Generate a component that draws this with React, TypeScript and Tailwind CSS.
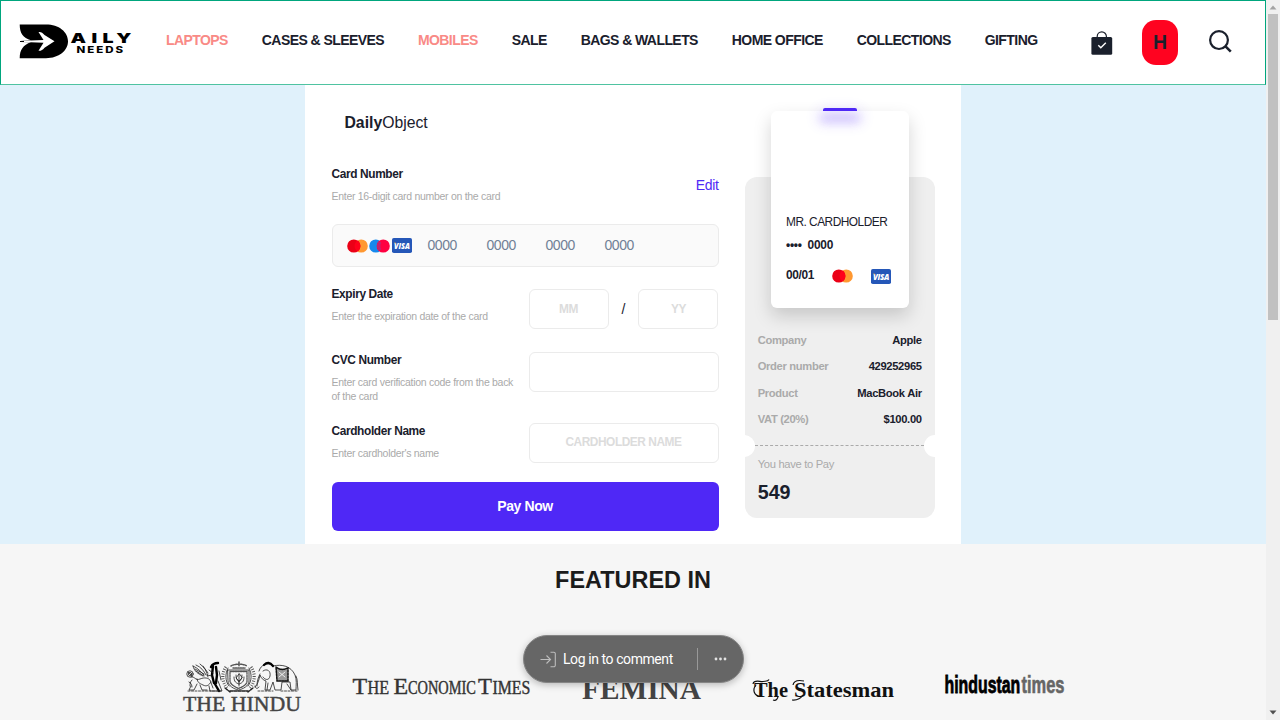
import type { ReactNode } from "react";

const navItems = [
  { label: "LAPTOPS", hot: true },
  { label: "CASES & SLEEVES" },
  { label: "MOBILES", hot: true },
  { label: "SALE" },
  { label: "BAGS & WALLETS" },
  { label: "HOME OFFICE" },
  { label: "COLLECTIONS" },
  { label: "GIFTING" },
];

const summary = [
  ["Company", "Apple"],
  ["Order number", "429252965"],
  ["Product", "MacBook Air"],
  ["VAT (20%)", "$100.00"],
];

function DailyLogo() {
  return (
    <svg width="118" height="38" viewBox="0 0 118 38" className="block">
      <path d="M.7 1.500H27C40 1.500 49 9 49 18.300S40 35.200 27 35.200H.7C.7 27 4 22 12 19.300L1 18.900V17.900L12 17.300C4 15 .7 10 .7 1.500Z" fill="#000" />
      <path d="M5 17.700L24.500 17L19.500 9C22 8.700 23.500 9.500 25.500 12L35.500 18.300L25.500 24.800C23.500 27.300 22 28 19.500 27.800L24.500 19.800L5 19.100Z" fill="#fff" />
      <g fontFamily="Inter, sans-serif" fontWeight="900" fill="#000">
        <text transform="translate(51.500 20.200) scale(1.450 1)" fontSize="13.500" letterSpacing="3.700">AILY</text>
        <text transform="translate(57.500 30.200) scale(1.350 1)" fontSize="8.500" fontWeight="800" letterSpacing="1.500">NEEDS</text>
      </g>
    </svg>
  );
}

function Mastercard() {
  return (
    <svg width="21" height="14" viewBox="0 0 21 14" className="block">
      <circle cx="14.2" cy="7" r="6.6" fill="#ff9831" />
      <circle cx="6.8" cy="7" r="6.6" fill="#eb0016" />
      <path d="M10.5 1.5a6.6 6.6 0 0 1 0 11a6.6 6.6 0 0 1 0-11Z" fill="#ff001b" />
    </svg>
  );
}

function Maestro() {
  return (
    <svg width="21" height="14" viewBox="0 0 21 14" className="block">
      <circle cx="6.8" cy="7" r="6.6" fill="#1689ed" />
      <circle cx="14.2" cy="7" r="6.6" fill="#ff0041" />
      <path d="M9 4h3M8 6h3.5M8 8h3.5M9 10h3" stroke="#8a4598" strokeWidth="1" />
    </svg>
  );
}

function Visa() {
  return (
    <svg width="20" height="15" viewBox="0 0 20 15" className="block">
      <rect width="20" height="15" rx="1.8" fill="#2557b8" />
      <text x="2" y="10.500" textLength="16" lengthAdjust="spacingAndGlyphs" fontFamily="Open Sans, sans-serif" fontStyle="italic" fontWeight="800" fontSize="8.200" fill="#fff">VISA</text>
      <path d="M2 4.6h1.5l.6 1.500Z" fill="#f4a83c" />
    </svg>
  );
}

function Label({ title, hint }: { title: string; hint: string }) {
  return (
    <div className="w-[190px]">
      <div className="h-[18px] text-[11.900px] font-bold leading-[18px] tracking-[-0.370px]">{title}</div>
      <div className="mt-[6px] text-[10.500px] leading-[14px] tracking-[-0.290px] text-[#aaa]">{hint}</div>
    </div>
  );
}

function Field({ children, className }: { children?: ReactNode; className: string }) {
  return (
    <div className={`flex h-[40px] items-center justify-center rounded-[6px] border border-[#ebebeb] pt-px text-[11.900px] font-bold tracking-[-0.450px] text-[#dcdcdc] ${className}`}>
      {children}
    </div>
  );
}

function Crest() {
  return (
    <g fill="none" stroke="#222" strokeWidth="0.8" strokeLinecap="round">
      <circle cx="8" cy="12" r="3.2" />
      <circle cx="8" cy="12" r="1.600" />
      <path d="M6 10l4 4M9 15c4-1 4 4 9 2s8-1 10 1l3 8M9 24l-2 4h5l3-6M18 23l2 5h5M27 24l1 5h6M15 17c1 4 2 4 6 6s6 0 8-3M10 18c-2 2-2 4-2 6M7 20c2 1 3 3 3 5" />
      <path d="M11 4c5 2 8 6 11 9M14 3c5 2 8 6 10 10M18 2c4 3 7 7 8 13M21 4l5 7M11 4c1 5 5 8 10 10M13 7l9 5M14 9l8 5" />
      <path d="M29 5c2-4 6-4 7-4M31 4l-1 9 2 8M34 5l1 8-1 8M33 22l4 7" stroke="#000" strokeWidth="2.4" />
      <path d="M37 9l2 9M36 19l4 10h-5M27 8l4 3M25 13l5 1" />
      <path d="M46 8h21v11c0 5-6 8-10.5 9C52 27 46 24 46 19Z" />
      <path d="M48 9.500h17v9.500c0 4-5 6-8.500 7.500C53 25 48 22 48 19Z" strokeDasharray="1.6 1" stroke="#555" strokeWidth="1.300" />
      <path d="M57 12v12M52 15c0 5 2 6 5 7M62 15c0 5-2 6-5 7M54 13c0 4 1 5 3 7M60 13c0 4-1 5-3 7M57 12l-3 4 3 3 3-3Z" />
      <path d="M44 5c-5 7-4 16 2 22M69 5c5 7 4 16-2 22" strokeWidth="3.200" stroke="#555" strokeDasharray=".9 1.500" strokeLinecap="butt" />
      <path d="M46 6c-3 6-3 13 1 18M67 6c3 6 3 13-1 18" />
      <path d="M49 4c4-2.500 12-2.500 16 0M57 0v4M51 6h12" strokeWidth="1.500" stroke="#555" strokeDasharray="1.300 1.100" />
      <path d="M48 29h18M43 26l5 4M71 26l-5 4" strokeWidth="1.300" strokeDasharray="3 1" />
      <path d="M77 9c2-7 9-9 14-5c9-2 18 0 22 9c2 5 1 10 1 15h-5l-1-8h-8l-1 8h-6l-2-8-3 8h-5l1-9c-3-1-5-3-6-6c-1 5-2 9-5 12M78 12c-2 4-3 7-3 12M73 24c0 3 3 3 4 1" />
      <path d="M81 9c4-3 8 0 7 5s-5 4-7 1M114 14c2 4 1 8 2 14M86 21l-1 7M105 22l4 6" />
      <path d="M94 5c4 3 7 3 12 1v13H95Z" fill="#999" stroke="#111" strokeWidth="1.500" strokeDasharray="2 1" />
      <path d="M97 10l6 5M103 10l-6 5" stroke="#fff" />
      <path d="M82 3c3-3 6-3 9 1" strokeWidth="2.200" stroke="#000" />
      <path d="M76 29h15M99 29h16M6 29h33" strokeDasharray="2 1.500" />
    </g>
  );
}

export default function App() {
  return (
    <div className="flex h-[720px] w-[1280px] overflow-hidden bg-[#f5f5f5] text-[#1a202c] [font-family:'Liberation_Sans',Arial,sans-serif]">
      <div className="relative flex w-[1266px] flex-col">
        <header className="flex h-[85px] shrink-0 items-start border border-b-[#4fc3a1] border-l-[#00a67d] border-r-[#00a67d] border-t-[#00a67d] bg-white">
          <div className="ml-[18px] mt-[22px] w-[147px]">
            <DailyLogo />
          </div>
          <nav className="mt-[27.500px] flex gap-[33.950px] whitespace-nowrap text-[14px] font-bold leading-[22px] tracking-[-0.570px]">
            {navItems.map((n) => (
              <span key={n.label} className={n.hot ? "text-[#f98a86]" : ""}>{n.label}</span>
            ))}
          </nav>
          <div className="ml-auto mr-[32.500px] mt-[18.500px] flex">
            <svg width="22" height="26" viewBox="0 0 22 26" className="mr-[29.500px] mt-[10.500px]">
              <path d="M6.200 8V6.500a4.600 4.600 0 0 1 9.200 0V8" fill="none" stroke="#1a202c" strokeWidth="1.200" />
              <rect x=".4" y="7" width="20.800" height="17.800" rx="1.500" fill="#1a202c" />
              <path d="M7.300 15.300l2.500 2.500 5-5" fill="none" stroke="#fff" strokeWidth="1.400" />
            </svg>
            <div className="flex h-[45px] w-[36px] items-center justify-center rounded-[14px] bg-[#ff0320] pt-px text-[19.500px] font-bold">H</div>
            <svg width="24" height="24" viewBox="0 0 24 24" className="ml-[30.500px] mt-[10.500px]" fill="none" stroke="#1a202c" strokeWidth="2.200">
              <circle cx="10" cy="10.100" r="8.900" />
              <path d="M16.300 16.200l5.500 5.500" strokeWidth="2.600" />
            </svg>
          </div>
        </header>

        <main className="flex h-[459px] shrink-0 justify-center bg-[#e0f1fb]">
          <div className="flex w-[656px] bg-white pl-[26.500px]">
            <form className="flex w-[387px] shrink-0 flex-col">
              <h1 className="ml-[13px] mt-[25.500px] h-[24px] text-[15.750px] leading-[24px]">
                <b>Daily</b>Object
              </h1>
              <div className="mt-[30px] flex h-[59px] justify-between">
                <Label title="Card Number" hint="Enter 16-digit card number on the card" />
                <span className="mt-[10px] h-[21px] text-[14px] leading-[21px] tracking-[-0.350px] text-[#4f2af5]">Edit</span>
              </div>
              <div className="flex h-[43px] items-center rounded-[6px] border border-[#ebebeb] bg-[#fafafa] pl-[14px] pt-px">
                <Mastercard />
                <div className="ml-[1.500px]"><Maestro /></div>
                <div className="ml-[1.500px]"><Visa /></div>
                <div className="ml-[16px] flex text-[14px] tracking-[-0.450px] text-[#718096]">
                  {[0, 1, 2, 3].map((i) => (
                    <span key={i} className="w-[59px]">0000</span>
                  ))}
                </div>
              </div>
              <div className="mt-[18px] flex h-[66px] items-start justify-between">
                <Label title="Expiry Date" hint="Enter the expiration date of the card" />
                <div className="mt-[4.500px] flex w-[190px] items-center justify-between">
                  <Field className="w-[80px]">MM</Field>
                  <span className="text-[14px]">/</span>
                  <Field className="w-[80px]">YY</Field>
                </div>
              </div>
              <div className="flex h-[71px] items-start justify-between">
                <Label title="CVC Number" hint="Enter card verification code from the back of the card" />
                <Field className="mt-[1px] w-[190px]" />
              </div>
              <div className="flex h-[60.500px] items-start justify-between">
                <Label title="Cardholder Name" hint="Enter cardholder's name" />
                <Field className="mt-[1px] w-[190px]">CARDHOLDER NAME</Field>
              </div>
              <button type="button" className="h-[48.500px] shrink-0 rounded-[6px] bg-[#4f28f6] text-[14px] font-bold tracking-[-0.400px] text-white">Pay Now</button>
            </form>

            <aside className="ml-[26.200px] mt-[91.500px] flex h-[341px] w-[190px] shrink-0 flex-col rounded-[12px] bg-[#efefef]">
              <div className="relative mx-auto -mt-[66px] h-[197px] w-[138px] shrink-0 rounded-[6px] bg-white px-[15.300px] pt-[101.500px] text-[11.900px] shadow-[0_8px_18px_rgba(0,0,0,0.17)]">
                <div className="absolute -top-[3px] left-[52px] h-[3px] w-[34px] rounded-t-[2px] bg-[#4f28f6] shadow-[0_7px_14px_5px_rgba(79,40,246,0.16),0_9px_9px_2px_rgba(79,40,246,0.16)]" />
                <div className="h-[22px] whitespace-nowrap leading-[20px] tracking-[-0.500px]">MR. CARDHOLDER</div>
                <div className="h-[32px] font-bold leading-[22px] tracking-[-0.270px]">••••&nbsp; 0000</div>
                <div className="flex h-[20px] items-center font-bold tracking-[-0.350px]">
                  <span className="w-[46px]">00/01</span>
                  <Mastercard />
                  <div className="ml-[18.500px]"><Visa /></div>
                </div>
              </div>
              <dl className="mt-[20px] px-[13px] text-[11.200px] font-bold tracking-[-0.330px]">
                {summary.map(([k, v]) => (
                  <div key={k} className="flex h-[26.200px] items-center justify-between">
                    <dt className="text-[#aaa]">{k}</dt>
                    <dd>{v}</dd>
                  </div>
                ))}
              </dl>
              <div className="mt-[2.500px] flex h-[22px] shrink-0 items-center justify-between overflow-hidden">
                <div className="-ml-[12px] size-[22px] shrink-0 rounded-full bg-white" />
                <div className="flex-1 border-t border-dashed border-[#aaa]" />
                <div className="-mr-[11px] size-[22px] shrink-0 rounded-full bg-white" />
              </div>
              <div className="-mt-px px-[13px]">
                <div className="text-[11.200px] leading-[16px] tracking-[-0.320px] text-[#aaa]">You have to Pay</div>
                <div className="mt-[5px] text-[19.700px] font-bold leading-[30px]">549</div>
              </div>
            </aside>
          </div>
        </main>

        <section className="flex flex-1 flex-col bg-[#f6f6f6]">
          <h2 className="mt-[18.500px] text-center text-[23.440px] font-bold leading-[34px] text-[#1b1b1b]">FEATURED IN</h2>
          <div className="mt-[61.500px] flex items-start pl-[181px]">
            <svg width="122" height="62" viewBox="0 0 122 62" className="shrink-0">
              <g transform="translate(1 4)"><Crest /></g>
              <text x="2" y="53" textLength="118" lengthAdjust="spacingAndGlyphs" fontFamily="Liberation Serif" fontSize="20" fill="#444" stroke="#444" strokeWidth=".4">THE HINDU</text>
            </svg>
            <svg width="180" height="62" viewBox="0 0 180 62" className="ml-[49px] shrink-0" fontFamily="Liberation Serif" fill="#333" stroke="#333" strokeWidth=".4">
              <text transform="translate(.5 36)" fontSize="24">T</text>
              <text transform="translate(15.500 36) scale(.9 1)" fontSize="18">HE</text>
              <text transform="translate(41.500 36)" fontSize="24">E</text>
              <text transform="translate(56 36) scale(.8 1)" fontSize="18">CONOMIC</text>
              <text transform="translate(126 36) scale(.95 1)" fontSize="24">T</text>
              <text transform="translate(140.500 36) scale(.88 1)" fontSize="18">IMES</text>
            </svg>
            <svg width="120" height="62" viewBox="0 0 120 62" className="ml-[50px] shrink-0">
              <text x="0" y="41" textLength="119" lengthAdjust="spacingAndGlyphs" fontFamily="Liberation Serif" fontWeight="700" fontSize="29" fill="#444">FEMINA</text>
            </svg>
            <svg width="143" height="62" viewBox="0 0 143 62" className="ml-[50px] shrink-0">
              <g fontFamily="Liberation Serif" fontWeight="700" fill="#111">
                <text x="2" y="39" textLength="34" lengthAdjust="spacingAndGlyphs" fontSize="22">The</text>
                <text x="42" y="39" textLength="100" lengthAdjust="spacingAndGlyphs" fontSize="22">Statesman</text>
              </g>
              <path d="M4 27c-4 5-2 11 5 11.500M1 26c1-5 7-2 10-2.500s5 0 6-2M40 42c5 .5 9-2 11-5M21 42c3 1 5-1 5-4M41 27c1-5 6-5 11-4" stroke="#111" strokeWidth="1.200" fill="none" />
            </svg>
            <svg width="123" height="62" viewBox="0 0 123 62" className="ml-[49px] shrink-0" fontFamily="Liberation Sans" fontWeight="700" fontSize="23.500">
              <text transform="translate(.5 34.500) scale(.675 1)" fill="#000" stroke="#000" strokeWidth=".8">hindustan</text>
              <text transform="translate(77.500 34.500) scale(.700 1)" fill="#666" stroke="#666" strokeWidth=".6">times</text>
            </svg>
          </div>
        </section>

        <div className="absolute left-[523px] top-[635px] flex h-[48px] w-[221px] items-center rounded-full border border-[#858585] bg-[#666] text-white shadow-[0_2px_7px_rgba(0,0,0,0.25)] [font-family:Roboto,sans-serif]">
          <svg width="17" height="17" viewBox="0 0 17 17" fill="none" stroke="#bdbdbd" strokeWidth="1.100" className="ml-[16px]">
            <path d="M.5 8.500h10M6.500 4.500l4 4-4 4M10.500 1.200h3.300a1.500 1.500 0 0 1 1.500 1.500v11.600a1.500 1.500 0 0 1-1.500 1.500h-3.300" />
          </svg>
          <span className="ml-[6px] w-[134px] whitespace-nowrap text-[14px] tracking-[-0.420px]">Log in to comment</span>
          <span className="h-[22px] w-px bg-[#999]" />
          <svg width="13" height="4" viewBox="0 0 13 4" className="ml-[16px]" fill="#e4e4e4">
            <circle cx="2" cy="2" r="1.400" />
            <circle cx="6.500" cy="2" r="1.400" />
            <circle cx="11" cy="2" r="1.400" />
          </svg>
        </div>
      </div>

      <div className="flex w-[14px] flex-col items-center bg-[#f0f0f0]">
        <svg width="14" height="14" viewBox="0 0 14 14"><path d="M3.500 9.500h7L7 5.500Z" fill="#a3a3a3" /></svg>
        <div className="h-[306px] w-[10px] bg-[#c1c1c1]" />
        <svg width="14" height="14" viewBox="0 0 14 14" className="mt-auto"><path d="M3.500 4.500h7L7 8.500Z" fill="#505050" /></svg>
      </div>
    </div>
  );
}
